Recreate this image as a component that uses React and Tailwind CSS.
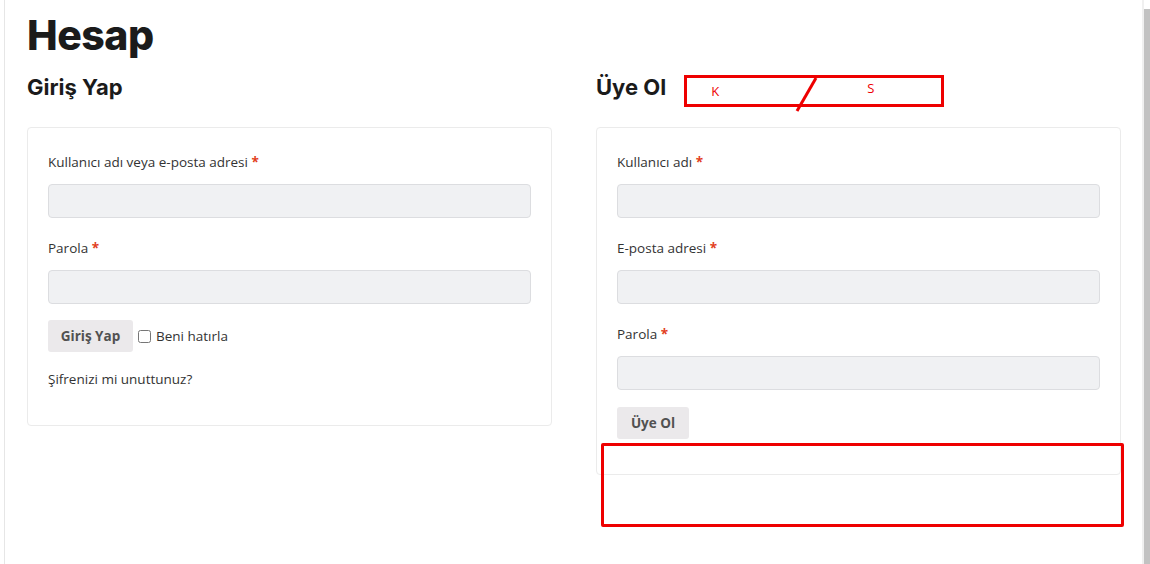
import React from 'react';

const Field = ({ label, type = 'text' }) => (
  <div className="mb-5">
    <label className="block h-5 mb-3 text-[13.5px] leading-5 text-[#333]">
      {label} <span className="text-[#e2401c] font-bold">*</span>
    </label>
    <input
      type={type}
      className="block w-full h-[34px] rounded-[4px] border border-[#dcdde0] bg-[#f0f1f3] outline-none"
    />
  </div>
);

const GrayButton = ({ children, className = '' }) => (
  <button
    className={`h-8 whitespace-nowrap rounded-[3px] bg-[#ebe9eb] text-[13.5px] font-bold text-[#515151] ${className}`}
  >
    {children}
  </button>
);

const App = () => {
  return (
    <div
      className="relative h-[564px] w-[1150px] overflow-hidden bg-white"
      style={{ fontFamily: '"Open Sans", "Noto Sans", sans-serif' }}
    >
      {/* page edges */}
      <div className="absolute left-[4px] top-0 h-full w-px bg-[#e6e6e6]" />
      <div className="absolute right-0 top-[9px] h-full w-[6px] bg-[#c2c2c2]" />
      <div className="absolute right-[6px] top-0 h-full w-[2px] bg-[#f0f0f0]" />

      <div className="pl-[27px] pr-[29px] pt-[10px]">
        <h1
          className="text-[41px] font-extrabold leading-[50px] tracking-[-0.5px] text-[#1b1b1b]"
          style={{ fontFamily: 'Inter, sans-serif' }}
        >
          Hesap
        </h1>

        <div className="mt-[12px] flex gap-[44px]">
          {/* login */}
          <div className="w-[525px]">
            <h2
              className="h-[30px] text-[22px] font-bold leading-[30px] text-[#1b1b1b]"
              style={{ fontFamily: 'Inter, sans-serif' }}
            >
              Giriş Yap
            </h2>
            <div className="mt-[25px] h-[299px] rounded-[4px] border border-[#ebebeb] px-5 pt-[24px]">
              <Field label="Kullanıcı adı veya e-posta adresi" />
              <Field label="Parola" type="password" />
              <div className="-mt-1 flex items-center">
                <GrayButton className="w-[85px]">Giriş Yap</GrayButton>
                <label className="ml-[5px] flex items-center text-[13.5px] text-[#333]">
                  <input type="checkbox" className="mr-[5px] h-[13px] w-[13px] accent-[#ddd]" />
                  Beni hatırla
                </label>
              </div>
              <p className="mt-[17px] text-[13.5px] leading-5 text-[#333]">Şifrenizi mi unuttunuz?</p>
            </div>
          </div>

          {/* register */}
          <div className="w-[525px]">
            <div className="flex h-[30px] items-center">
              <h2
                className="text-[22px] font-bold leading-[30px] text-[#1b1b1b]"
                style={{ fontFamily: 'Inter, sans-serif' }}
              >
                Üye Ol
              </h2>
              <div className="relative ml-[18px] mt-[7px] h-[32px] w-[260px] border-[3px] border-[#e00]">
                <span className="absolute left-[24px] top-[5px] text-[13px] leading-4 text-[#e00]">K</span>
                <span className="absolute left-[180px] top-[2px] text-[13px] leading-4 text-[#e00]">S</span>
                <svg className="absolute left-[105px] top-[-2px]" width="30" height="40" viewBox="0 0 30 40">
                  <line x1="24" y1="2" x2="5" y2="35" stroke="#e00" strokeWidth="3" />
                </svg>
              </div>
            </div>
            <div className="mt-[25px] h-[348px] rounded-[4px] border border-[#ebebeb] px-5 pt-[24px]">
              <Field label="Kullanıcı adı" />
              <Field label="E-posta adresi" type="email" />
              <Field label="Parola" type="password" />
              <GrayButton className="-mt-[3px] w-[72px]">Üye Ol</GrayButton>
            </div>
          </div>
        </div>
      </div>

      {/* marked area below register */}
      <div className="absolute left-[601px] top-[443px] h-[84px] w-[523px] rounded-[2px] border-[3px] border-[#e00]" />
    </div>
  );
};

export default App;
